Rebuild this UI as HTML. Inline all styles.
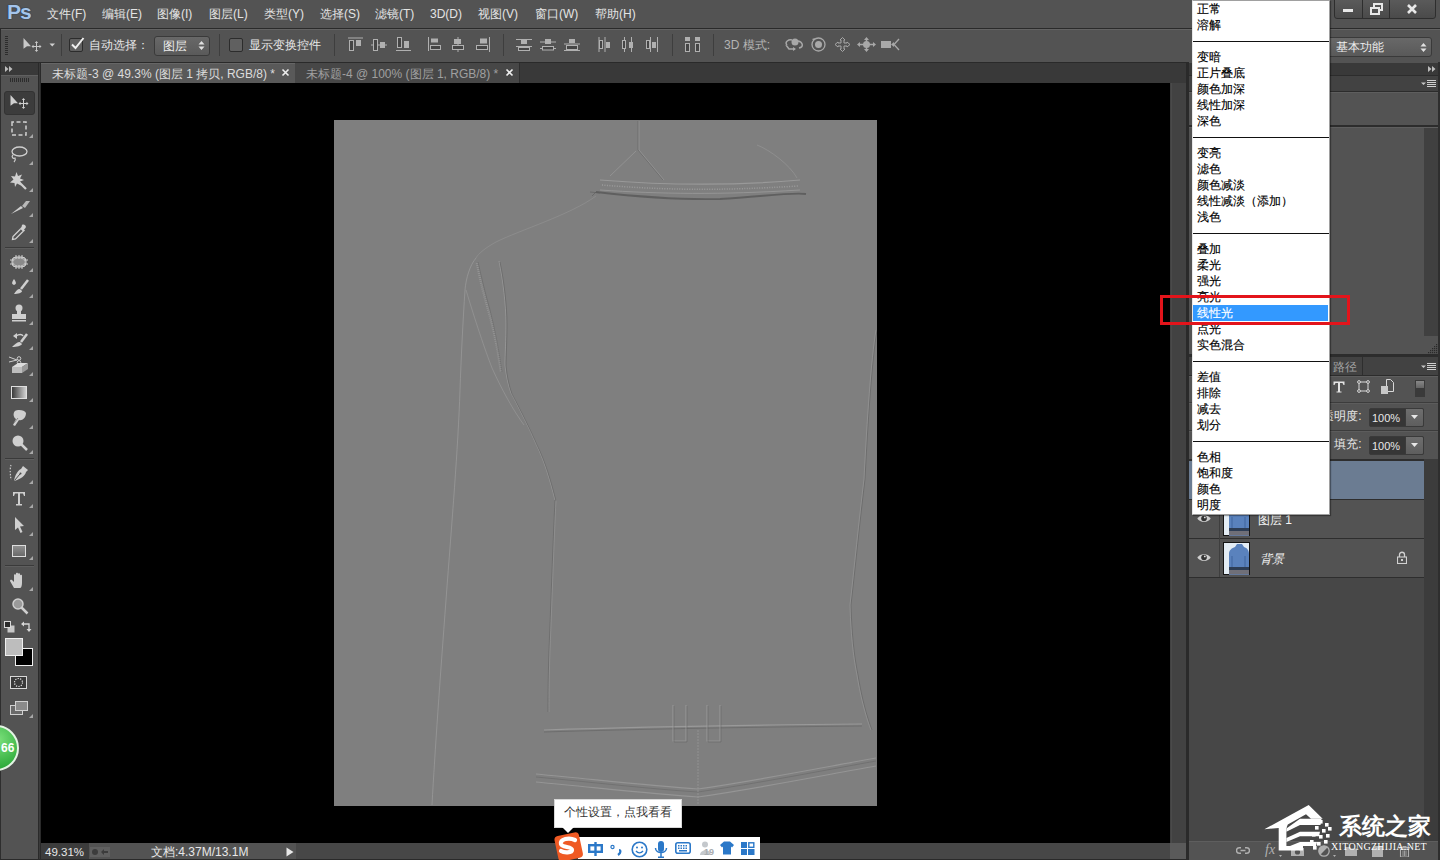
<!DOCTYPE html>
<html><head><meta charset="utf-8">
<style>
*{margin:0;padding:0;box-sizing:border-box}
html,body{width:1440px;height:860px;overflow:hidden;background:#535353;font-family:"Liberation Sans",sans-serif;color:#e0e0e0}
.a{position:absolute;display:block}
.t{position:absolute;white-space:nowrap;font-size:12px;line-height:14px}
</style></head><body>
<div class="a" style="left:0px;top:0px;width:1440px;height:860px;background:#535353;"></div>
<div class="a" style="left:0px;top:0px;width:1440px;height:28px;background:#535353;"></div>
<div class="a" style="left:0px;top:28px;width:1440px;height:1px;background:#2a2a2a;"></div>
<div class="a" style="left:0px;top:29px;width:1440px;height:33px;background:#535353;"></div>
<div class="a" style="left:0px;top:29px;width:1440px;height:1px;background:#636363;"></div>
<div class="a" style="left:0px;top:62px;width:1440px;height:1px;background:#2a2a2a;"></div>
<div class="a" style="left:0px;top:29px;width:1px;height:34px;background:#2a2a2a;"></div>
<div class="t" style="left:7px;top:0px;font-size:21px;line-height:24px;font-weight:bold;color:#a4c4ea;letter-spacing:-1px;text-shadow:0 0 1px #1e3550,0 0 1px #1e3550">Ps</div>
<div class="t" style="left:47px;top:7px;color:#e4e4e4;font-size:12px;">文件(F)</div>
<div class="t" style="left:102px;top:7px;color:#e4e4e4;font-size:12px;">编辑(E)</div>
<div class="t" style="left:157px;top:7px;color:#e4e4e4;font-size:12px;">图像(I)</div>
<div class="t" style="left:209px;top:7px;color:#e4e4e4;font-size:12px;">图层(L)</div>
<div class="t" style="left:264px;top:7px;color:#e4e4e4;font-size:12px;">类型(Y)</div>
<div class="t" style="left:320px;top:7px;color:#e4e4e4;font-size:12px;">选择(S)</div>
<div class="t" style="left:375px;top:7px;color:#e4e4e4;font-size:12px;">滤镜(T)</div>
<div class="t" style="left:430px;top:7px;color:#e4e4e4;font-size:12px;">3D(D)</div>
<div class="t" style="left:478px;top:7px;color:#e4e4e4;font-size:12px;">视图(V)</div>
<div class="t" style="left:535px;top:7px;color:#e4e4e4;font-size:12px;">窗口(W)</div>
<div class="t" style="left:595px;top:7px;color:#e4e4e4;font-size:12px;">帮助(H)</div>
<div class="a" style="left:1334px;top:-3px;width:102px;height:22px;border:1px solid #2e2e2e;border-radius:3px;background:linear-gradient(#5c5c5c,#4a4a4a)"></div>
<div class="a" style="left:1362px;top:0px;width:1px;height:18px;background:#2e2e2e;"></div>
<div class="a" style="left:1389px;top:0px;width:1px;height:18px;background:#2e2e2e;"></div>
<div class="a" style="left:1343px;top:9px;width:10px;height:3px;background:#e8e8e8;"></div>
<svg class="a" style="left:1370px;top:3px;" width="14" height="12" viewBox="0 0 14 12"><rect x="4" y="1" width="8" height="6" fill="none" stroke="#e8e8e8" stroke-width="2"/><rect x="1" y="5" width="8" height="6" fill="#525252" stroke="#e8e8e8" stroke-width="2"/></svg>
<svg class="a" style="left:1406px;top:3px;" width="12" height="12" viewBox="0 0 12 12"><path d="M2 2L10 10M10 2L2 10" stroke="#e8e8e8" stroke-width="2.6"/></svg>
<svg class="a" style="left:5px;top:36px;" width="3" height="20" viewBox="0 0 3 20"><rect x="0" y="0" width="3" height="1" fill="#2c2c2c"/><rect x="0" y="2" width="3" height="1" fill="#2c2c2c"/><rect x="0" y="4" width="3" height="1" fill="#2c2c2c"/><rect x="0" y="6" width="3" height="1" fill="#2c2c2c"/><rect x="0" y="8" width="3" height="1" fill="#2c2c2c"/><rect x="0" y="10" width="3" height="1" fill="#2c2c2c"/><rect x="0" y="12" width="3" height="1" fill="#2c2c2c"/><rect x="0" y="14" width="3" height="1" fill="#2c2c2c"/><rect x="0" y="16" width="3" height="1" fill="#2c2c2c"/><rect x="0" y="18" width="3" height="1" fill="#2c2c2c"/></svg>
<svg class="a" style="left:23px;top:38px;" width="19" height="14" viewBox="0 0 19 14"><path d="M0.5 0L8 8.2H4L0.5 10.8Z" fill="#c8c8c8"/><path d="M13.5 4V13M9.5 8.5H17.5" stroke="#c8c8c8" stroke-width="1"/><path d="M13.5 3L11.8 5H15.2ZM13.5 14L11.8 12H15.2ZM8.5 8.5L10.5 6.8V10.2ZM18.5 8.5L16.5 6.8V10.2Z" fill="#c8c8c8"/></svg>
<svg class="a" style="left:49px;top:43px;" width="7" height="4" viewBox="0 0 7 4"><path d="M0.5 0.5H6L3.25 3.5Z" fill="#d0d0d0"/></svg>
<div class="a" style="left:61px;top:34px;width:1px;height:22px;background:#3e3e3e;"></div>
<div class="a" style="left:69px;top:38px;width:14px;height:14px;border:1px solid #2c2c2c;border-radius:2px;background:#606060"></div>
<svg class="a" style="left:70px;top:36px;" width="15" height="15" viewBox="0 0 15 15"><path d="M2 8.5L5.5 12L13.5 2" fill="none" stroke="#f0f0f0" stroke-width="2"/></svg>
<div class="t" style="left:89px;top:38px;color:#e6e6e6;font-size:12px;">自动选择：</div>
<div class="a" style="left:154px;top:36px;width:56px;height:20px;border:1px solid #3a3a3a;border-radius:3px;background:linear-gradient(#686868,#5a5a5a)"></div>
<div class="t" style="left:163px;top:39px;color:#eeeeee;font-size:12px;">图层</div>
<svg class="a" style="left:198px;top:40px;" width="7" height="11" viewBox="0 0 7 11"><path d="M0.5 4.5L3.5 1L6.5 4.5ZM0.5 6.5L3.5 10L6.5 6.5Z" fill="#e0e0e0"/></svg>
<div class="a" style="left:219px;top:34px;width:1px;height:22px;background:#3e3e3e;"></div>
<div class="a" style="left:229px;top:38px;width:14px;height:14px;border:1px solid #2c2c2c;border-radius:2px;background:#606060"></div>
<div class="t" style="left:249px;top:38px;color:#e6e6e6;font-size:12px;">显示变换控件</div>
<div class="a" style="left:334px;top:34px;width:1px;height:22px;background:#3e3e3e;"></div>
<svg class="a" style="left:348px;top:37px;" width="16" height="15" viewBox="0 0 16 15"><rect x="0" y="0.5" width="15" height="1" fill="#b0b0b0"/><rect x="1.5" y="3.5" width="4" height="10" stroke="#b0b0b0" stroke-width="1" fill="#454545"/><rect x="8" y="3" width="5" height="6" fill="#b0b0b0"/></svg>
<svg class="a" style="left:371px;top:37px;" width="16" height="15" viewBox="0 0 16 15"><rect x="0" y="7.5" width="16" height="1" fill="#b0b0b0"/><rect x="2.5" y="2.5" width="4" height="11" stroke="#b0b0b0" stroke-width="1" fill="#454545"/><rect x="9" y="5" width="5" height="6" fill="#b0b0b0"/></svg>
<svg class="a" style="left:396px;top:37px;" width="16" height="15" viewBox="0 0 16 15"><rect x="0" y="13" width="15" height="1" fill="#b0b0b0"/><rect x="1.5" y="0.5" width="4" height="10" stroke="#b0b0b0" stroke-width="1" fill="#454545"/><rect x="8" y="4" width="5" height="7" fill="#b0b0b0"/></svg>
<svg class="a" style="left:428px;top:37px;" width="16" height="15" viewBox="0 0 16 15"><rect x="0" y="0" width="1" height="14" fill="#b0b0b0"/><rect x="3" y="1.5" width="7" height="4" fill="#b0b0b0"/><rect x="2.5" y="8.5" width="10" height="4" stroke="#b0b0b0" stroke-width="1" fill="#454545"/></svg>
<svg class="a" style="left:452px;top:37px;" width="16" height="15" viewBox="0 0 16 15"><rect x="5.5" y="0" width="1" height="15" fill="#b0b0b0"/><rect x="2" y="2" width="7" height="5" fill="#b0b0b0"/><rect x="0.5" y="8.5" width="11" height="4" stroke="#b0b0b0" stroke-width="1" fill="#454545"/></svg>
<svg class="a" style="left:476px;top:37px;" width="16" height="15" viewBox="0 0 16 15"><rect x="13" y="0" width="1" height="15" fill="#b0b0b0"/><rect x="4" y="1.5" width="7" height="5" fill="#b0b0b0"/><rect x="0.5" y="8.5" width="11" height="4" stroke="#b0b0b0" stroke-width="1" fill="#454545"/></svg>
<div class="a" style="left:503px;top:34px;width:1px;height:22px;background:#3e3e3e;"></div>
<svg class="a" style="left:516px;top:38px;" width="16" height="15" viewBox="0 0 16 15"><rect x="0" y="1" width="16" height="1" fill="#b0b0b0"/><rect x="0" y="8" width="16" height="1" fill="#b0b0b0"/><rect x="5" y="2" width="6" height="4" fill="#b0b0b0"/><rect x="2.5" y="9.5" width="11" height="3" stroke="#b0b0b0" stroke-width="1" fill="#454545"/></svg>
<svg class="a" style="left:540px;top:38px;" width="16" height="15" viewBox="0 0 16 15"><rect x="0" y="3.5" width="16" height="1" fill="#b0b0b0"/><rect x="0" y="10" width="16" height="1" fill="#b0b0b0"/><rect x="5" y="1" width="6" height="5" fill="#b0b0b0"/><rect x="2.5" y="8.5" width="11" height="3.5" stroke="#b0b0b0" stroke-width="1" fill="#454545"/></svg>
<svg class="a" style="left:564px;top:38px;" width="16" height="15" viewBox="0 0 16 15"><rect x="0" y="5.5" width="16" height="1" fill="#b0b0b0"/><rect x="0" y="12" width="16" height="1" fill="#b0b0b0"/><rect x="5" y="1" width="6" height="4" fill="#b0b0b0"/><rect x="2.5" y="7.5" width="11" height="4" stroke="#b0b0b0" stroke-width="1" fill="#454545"/></svg>
<svg class="a" style="left:598px;top:37px;" width="16" height="15" viewBox="0 0 16 15"><rect x="0.5" y="0" width="1" height="15" fill="#b0b0b0"/><rect x="6.5" y="0" width="1" height="15" fill="#b0b0b0"/><rect x="1.5" y="3.5" width="3" height="8" stroke="#b0b0b0" stroke-width="1" fill="#454545"/><rect x="8" y="5" width="4" height="6" fill="#b0b0b0"/></svg>
<svg class="a" style="left:622px;top:37px;" width="16" height="15" viewBox="0 0 16 15"><rect x="2" y="0" width="1" height="15" fill="#b0b0b0"/><rect x="9" y="0" width="1" height="15" fill="#b0b0b0"/><rect x="0.5" y="3.5" width="3" height="8" stroke="#b0b0b0" stroke-width="1" fill="#454545"/><rect x="7" y="5" width="4" height="6" fill="#b0b0b0"/></svg>
<svg class="a" style="left:646px;top:37px;" width="16" height="15" viewBox="0 0 16 15"><rect x="4" y="0" width="1" height="15" fill="#b0b0b0"/><rect x="11" y="0" width="1" height="15" fill="#b0b0b0"/><rect x="0.5" y="3.5" width="3" height="8" stroke="#b0b0b0" stroke-width="1" fill="#454545"/><rect x="6" y="5" width="4" height="6" fill="#b0b0b0"/></svg>
<div class="a" style="left:672px;top:34px;width:1px;height:22px;background:#3e3e3e;"></div>
<svg class="a" style="left:685px;top:37px;" width="16" height="15" viewBox="0 0 16 15"><rect x="0" y="0" width="5" height="4" fill="#b0b0b0"/><rect x="10" y="0" width="5" height="4" fill="#b0b0b0"/><rect x="0.5" y="6.5" width="4" height="8" stroke="#b0b0b0" stroke-width="1" fill="#454545"/><rect x="10.5" y="6.5" width="4" height="8" stroke="#b0b0b0" stroke-width="1" fill="#454545"/></svg>
<div class="a" style="left:713px;top:34px;width:1px;height:22px;background:#3e3e3e;"></div>
<div class="t" style="left:724px;top:38px;color:#b4b4b4;font-size:12px;">3D 模式:</div>
<svg class="a" style="left:784px;top:37px;" width="20" height="15" viewBox="0 0 20 15"><circle cx="11" cy="5" r="3.5" fill="#a8a8a8"/><path d="M3 8C0 5 5 2 8 3M14 4C19 5 20 10 15 11M2 8L5 12H11" fill="none" stroke="#a8a8a8" stroke-width="1.5"/><path d="M9 10L12 12L9 14Z" fill="#a8a8a8"/></svg>
<svg class="a" style="left:810px;top:37px;" width="17" height="15" viewBox="0 0 17 15"><circle cx="8.5" cy="7.5" r="6.5" fill="none" stroke="#a8a8a8" stroke-width="1.3"/><circle cx="8.5" cy="7.5" r="3.5" fill="#a8a8a8"/><path d="M2 2L5 1L4 4Z" fill="#a8a8a8"/></svg>
<svg class="a" style="left:834px;top:37px;" width="17" height="15" viewBox="0 0 17 15"><path d="M8.5 0.5L11 3H10V6H13V5L16 7.5L13 10V9H10V12H11L8.5 14.5L6 12H7V9H4V10L1 7.5L4 5V6H7V3H6Z" fill="none" stroke="#a8a8a8" stroke-width="1"/></svg>
<svg class="a" style="left:857px;top:37px;" width="19" height="15" viewBox="0 0 19 15"><path d="M9.5 0L12 3H7ZM9.5 15L12 12H7ZM0 7.5L3 5V10ZM19 7.5L16 5V10Z" fill="#a8a8a8"/><circle cx="9.5" cy="7.5" r="3.5" fill="#a8a8a8"/><path d="M3 7.5H16M9.5 3V12" stroke="#a8a8a8" stroke-width="1.5"/></svg>
<svg class="a" style="left:881px;top:38px;" width="19" height="14" viewBox="0 0 19 14"><rect x="0" y="3" width="10" height="7" fill="#a8a8a8"/><path d="M10 6.5L13 4V9Z" fill="#a8a8a8"/><path d="M18 1L13 6.5L18 12" fill="none" stroke="#a8a8a8" stroke-width="1.3"/></svg>
<div class="a" style="left:1310px;top:37px;width:122px;height:20px;border:1px solid #3a3a3a;border-radius:3px;background:linear-gradient(#686868,#595959)"></div>
<div class="t" style="left:1336px;top:40px;color:#eeeeee;font-size:12px;">基本功能</div>
<svg class="a" style="left:1420px;top:42px;" width="7" height="11" viewBox="0 0 7 11"><path d="M0.5 4.5L3.5 1L6.5 4.5ZM0.5 6.5L3.5 10L6.5 6.5Z" fill="#e0e0e0"/></svg>
<div class="a" style="left:41px;top:63px;width:1145px;height:20px;background:#393939;"></div>
<div class="a" style="left:41px;top:63px;width:254px;height:20px;background:#595959;"></div>
<div class="a" style="left:41px;top:63px;width:254px;height:1px;background:#666666;"></div>
<div class="a" style="left:295px;top:63px;width:225px;height:20px;background:#474747;"></div>
<div class="a" style="left:519px;top:63px;width:1px;height:20px;background:#2e2e2e;"></div>
<div class="t" style="left:52px;top:67px;color:#dcdcdc;font-size:12px;">未标题-3 @ 49.3% (图层 1 拷贝, RGB/8) *</div>
<svg class="a" style="left:281px;top:68px;" width="9" height="9" viewBox="0 0 9 9"><path d="M1.5 1.5L7.5 7.5M7.5 1.5L1.5 7.5" stroke="#eeeeee" stroke-width="1.6"/></svg>
<div class="t" style="left:306px;top:67px;color:#a0a0a0;font-size:12px;">未标题-4 @ 100% (图层 1, RGB/8) *</div>
<svg class="a" style="left:505px;top:68px;" width="9" height="9" viewBox="0 0 9 9"><path d="M1.5 1.5L7.5 7.5M7.5 1.5L1.5 7.5" stroke="#eeeeee" stroke-width="1.6"/></svg>
<div class="a" style="left:41px;top:83px;width:1129px;height:760px;background:#000000;"></div>
<div class="a" style="left:334px;top:120px;width:543px;height:686px;background:#7f7f7f;"></div>
<svg class="a" style="left:334px;top:120px" width="543" height="685" viewBox="334 120 543 685"><path d="M638 121V150L663 180" fill="none" stroke="#5c5c5c" stroke-width="1" opacity=".45"/><path d="M639 121V150L664 180" fill="none" stroke="#a4a4a4" stroke-width="1" opacity=".5"/><path d="M636 151L610 176" fill="none" stroke="#a4a4a4" stroke-width="1" opacity=".5"/><path d="M757 145C770 150 790 165 797 178" fill="none" stroke="#a4a4a4" stroke-width="1" opacity=".4"/><path d="M600 180C650 184 720 187 800 180" fill="none" stroke="#a4a4a4" stroke-width="1.2" opacity=".7"/><path d="M602 185C660 190 720 191 798 186" fill="none" stroke="#a4a4a4" stroke-width="1.5" opacity=".8" stroke-dasharray="1 1.5"/><path d="M600 190C660 194 720 195 800 190" fill="none" stroke="#a4a4a4" stroke-width="1" opacity=".6"/><path d="M596 192C640 197 680 200 720 199C760 197 790 192 806 194" fill="none" stroke="#5c5c5c" stroke-width="1.8" opacity=".9"/><path d="M596 192L592 196M600 193L590 192" fill="none" stroke="#5c5c5c" stroke-width="1" opacity=".6"/><path d="M596 196C570 215 520 230 496 242C485 248 478 254 476 258" fill="none" stroke="#a4a4a4" stroke-width="1" opacity=".35"/><path d="M476 258C470 265 466 278 465 290C463 320 461 360 460 390C458 450 452 520 446 600C440 680 435 750 432 805" fill="none" stroke="#a4a4a4" stroke-width="1" opacity=".55"/><path d="M477 263C480 280 484 295 488 309C494 330 498 350 501 372" fill="none" stroke="#a4a4a4" stroke-width="2.5" opacity=".55" stroke-dasharray="1 1"/><path d="M478 262C482 280 486 296 490 310C495 330 499 350 502 372" fill="none" stroke="#5c5c5c" stroke-width="1" opacity=".4"/><path d="M499 261C503 280 506 305 506 324C506 340 505 355 505 365C506 375 508 385 511 393C520 410 530 430 536 444C544 460 550 480 555 500" fill="none" stroke="#a4a4a4" stroke-width="1" opacity=".6"/><path d="M500 262C504 281 507 306 507 325C507 341 506 356 506 366C507 376 509 386 512 394C521 411 531 431 537 445C545 461 551 481 556 501" fill="none" stroke="#5c5c5c" stroke-width="1" opacity=".5"/><path d="M466 290C475 320 485 350 492 368C502 390 513 410 524 425" fill="none" stroke="#a4a4a4" stroke-width="1" opacity=".45"/><path d="M555 500C553 540 551 600 549 650C548 680 548 700 548 712" fill="none" stroke="#5c5c5c" stroke-width="1" opacity=".45"/><path d="M556 500C554 540 552 600 550 650C549 680 549 700 549 712" fill="none" stroke="#a4a4a4" stroke-width="1" opacity=".4"/><path d="M877 330C872 360 868 420 865 479C860 520 855 570 851 605C852 640 855 660 858 675C862 700 868 720 872 730" fill="none" stroke="#5c5c5c" stroke-width="1" opacity=".5"/><path d="M876 330C871 360 867 420 864 479C859 520 854 570 850 605C851 640 854 660 857 675C861 700 867 720 871 730" fill="none" stroke="#a4a4a4" stroke-width="1" opacity=".45"/><path d="M544 730C640 727 760 725 862 724" fill="none" stroke="#a4a4a4" stroke-width="1.2" opacity=".7"/><path d="M544 732C640 729 760 727 862 726" fill="none" stroke="#5c5c5c" stroke-width="1" opacity=".5"/><path d="M536 774C600 780 650 786 698 789C760 780 820 768 876 758" fill="none" stroke="#a4a4a4" stroke-width="1.2" opacity=".6"/><path d="M536 782C600 788 650 794 698 797C760 788 820 776 876 766" fill="none" stroke="#a4a4a4" stroke-width="1.2" opacity=".6"/><path d="M536 777C600 783 650 789 698 792C760 783 820 771 876 761" fill="none" stroke="#5c5c5c" stroke-width="1" opacity=".4"/><path d="M698 730V805" fill="none" stroke="#a4a4a4" stroke-width="1" opacity=".5" stroke-dasharray="2 1"/><path d="M673 705V741H686V705M707 705V741H720V705" fill="none" stroke="#a4a4a4" stroke-width="1.2" opacity=".6"/><path d="M674 706V742H687V706M708 706V742H721V706" fill="none" stroke="#5c5c5c" stroke-width="1" opacity=".4"/></svg>
<div class="a" style="left:1170px;top:83px;width:16px;height:760px;background:#424242;"></div>
<div class="a" style="left:1171px;top:83px;width:1px;height:760px;background:#4a4a4a;"></div>
<div class="a" style="left:1186px;top:62px;width:3px;height:798px;background:#2a2a2a;"></div>
<div class="a" style="left:41px;top:843px;width:1129px;height:16px;background:#474747;"></div>
<div class="a" style="left:41px;top:843px;width:48px;height:16px;background:#3c3c3c;"></div>
<div class="a" style="left:89px;top:843px;width:207px;height:16px;background:#535353;"></div>
<div class="a" style="left:1170px;top:843px;width:16px;height:16px;background:#5a5a5a;"></div>
<div class="a" style="left:0px;top:859px;width:1440px;height:1px;background:#2a2a2a;"></div>
<div class="t" style="left:45px;top:845px;color:#e8e8e8;font-size:11.5px;">49.31%</div>
<div class="a" style="left:90px;top:847px;width:20px;height:10px;background:#606060;"></div>
<svg class="a" style="left:91px;top:848px;" width="18" height="8" viewBox="0 0 18 8"><circle cx="4" cy="4" r="3" fill="#3c3c3c"/><path d="M10 4L13 1V3H17V5H13V7Z" fill="#3c3c3c"/></svg>
<div class="t" style="left:151px;top:845px;color:#e8e8e8;font-size:12px;">文档:4.37M/13.1M</div>
<svg class="a" style="left:286px;top:847px;" width="8" height="10" viewBox="0 0 8 10"><path d="M0.5 0.5L7.5 5L0.5 9.5Z" fill="#e8e8e8"/></svg>
<div class="a" style="left:0px;top:63px;width:38px;height:796px;background:#535353;"></div>
<div class="a" style="left:0px;top:63px;width:1px;height:796px;background:#2e2e2e;"></div>
<div class="a" style="left:38px;top:63px;width:3px;height:796px;background:#2a2a2a;"></div>
<div class="a" style="left:39px;top:63px;width:1px;height:796px;background:#3a3a3a;"></div>
<div class="a" style="left:1px;top:63px;width:37px;height:12px;background:#393939;"></div>
<svg class="a" style="left:5px;top:66px;" width="8" height="6" viewBox="0 0 8 6"><path d="M0 0L3.5 3L0 6ZM4 0L7.5 3L4 6Z" fill="#bdbdbd"/></svg>
<div class="a" style="left:1px;top:75px;width:37px;height:1px;background:#606060;"></div>
<svg class="a" style="left:10px;top:78px;" width="20" height="4" viewBox="0 0 20 4"><rect x="0" y="0" width="1" height="4" fill="#2c2c2c"/><rect x="2" y="0" width="1" height="4" fill="#2c2c2c"/><rect x="4" y="0" width="1" height="4" fill="#2c2c2c"/><rect x="6" y="0" width="1" height="4" fill="#2c2c2c"/><rect x="8" y="0" width="1" height="4" fill="#2c2c2c"/><rect x="10" y="0" width="1" height="4" fill="#2c2c2c"/><rect x="12" y="0" width="1" height="4" fill="#2c2c2c"/><rect x="14" y="0" width="1" height="4" fill="#2c2c2c"/><rect x="16" y="0" width="1" height="4" fill="#2c2c2c"/><rect x="18" y="0" width="1" height="4" fill="#2c2c2c"/></svg>
<div class="a" style="left:4px;top:91px;width:31px;height:24px;border:1px solid #333;border-radius:3px;background:#3c3c3c"></div>
<svg class="a" style="left:10px;top:95px;" width="19" height="14" viewBox="0 0 19 14"><path d="M0.5 0L8 8.2H4L0.5 10.8Z" fill="#cfcfcf"/><path d="M13.5 4V13M9.5 8.5H17.5" stroke="#cfcfcf" stroke-width="1"/><path d="M13.5 3L11.8 5H15.2ZM13.5 14L11.8 12H15.2ZM8.5 8.5L10.5 6.8V10.2ZM18.5 8.5L16.5 6.8V10.2Z" fill="#cfcfcf"/></svg>
<svg class="a" style="left:11px;top:121px;" width="16" height="15" viewBox="0 0 16 15"><rect x="1" y="1" width="14" height="13" fill="none" stroke="#cfcfcf" stroke-width="1.5" stroke-dasharray="4 2.5" stroke-dashoffset="2"/></svg>
<svg class="a" style="left:29px;top:134px;" width="4" height="4" viewBox="0 0 4 4"><path d="M4 0V4H0Z" fill="#a8a8a8"/></svg>
<svg class="a" style="left:10px;top:146px;" width="18" height="17" viewBox="0 0 18 17"><ellipse cx="9.5" cy="5.5" rx="7.5" ry="4.5" fill="none" stroke="#cfcfcf" stroke-width="1.3"/><path d="M3 9C1 11 3 13 5 12C6 14 4 16 4 16" fill="none" stroke="#cfcfcf" stroke-width="1.2"/></svg>
<svg class="a" style="left:29px;top:161px;" width="4" height="4" viewBox="0 0 4 4"><path d="M4 0V4H0Z" fill="#a8a8a8"/></svg>
<svg class="a" style="left:10px;top:172px;" width="18" height="18" viewBox="0 0 18 18"><path d="M6.5 0L8 4L12 2.5L10 6.5L14 8L10 9.5L11 13.5L7 11.5L5 15L4.5 11L0 10.5L3.5 7.5L1 4L5 4.5Z" fill="#cfcfcf"/><path d="M9 10L16 17" stroke="#cfcfcf" stroke-width="2.2"/></svg>
<svg class="a" style="left:29px;top:188px;" width="4" height="4" viewBox="0 0 4 4"><path d="M4 0V4H0Z" fill="#a8a8a8"/></svg>
<svg class="a" style="left:10px;top:200px;" width="20" height="15" viewBox="0 0 20 15"><path d="M1 14L11 6L13 8Z" fill="#cfcfcf"/><path d="M12 6L16 1H20L15 8Z" fill="#b8b8b8"/></svg>
<svg class="a" style="left:29px;top:213px;" width="4" height="4" viewBox="0 0 4 4"><path d="M4 0V4H0Z" fill="#a8a8a8"/></svg>
<svg class="a" style="left:11px;top:224px;" width="17" height="17" viewBox="0 0 17 17"><path d="M11 1C13 -0.5 16 2 14.5 4L13 5.5L14 6.5L12.5 8L9 4.5L10.5 3Z" fill="#cfcfcf"/><path d="M9.5 5L2 12.5L1.5 15.5L4.5 15L12 7.5" fill="none" stroke="#cfcfcf" stroke-width="1.3"/></svg>
<svg class="a" style="left:29px;top:239px;" width="4" height="4" viewBox="0 0 4 4"><path d="M4 0V4H0Z" fill="#a8a8a8"/></svg>
<div class="a" style="left:5px;top:247px;width:29px;height:1px;background:#3a3a3a;"></div>
<div class="a" style="left:5px;top:248px;width:29px;height:1px;background:#5e5e5e;"></div>
<svg class="a" style="left:10px;top:254px;" width="18" height="16" viewBox="0 0 18 16"><rect x="2" y="3" width="14" height="10" rx="4" fill="#9a9a9a" stroke="#cfcfcf" stroke-width="1"/><path d="M6 1V15M9 1V15M12 1V15M0 6H18M0 10H18" stroke="#cfcfcf" stroke-width="1"/><rect x="4" y="5" width="10" height="6" rx="2" fill="#8a8a8a"/></svg>
<svg class="a" style="left:29px;top:268px;" width="4" height="4" viewBox="0 0 4 4"><path d="M4 0V4H0Z" fill="#a8a8a8"/></svg>
<svg class="a" style="left:10px;top:279px;" width="20" height="17" viewBox="0 0 20 17"><path d="M4 0C6 3 7 5 4 6C1 5 2 3 4 0Z" fill="#cfcfcf"/><path d="M18 1L11 10" stroke="#cfcfcf" stroke-width="2.5"/><path d="M10 10C7 10 6 12 4 15C8 15 12 14 12 12Z" fill="#cfcfcf"/></svg>
<svg class="a" style="left:29px;top:294px;" width="4" height="4" viewBox="0 0 4 4"><path d="M4 0V4H0Z" fill="#a8a8a8"/></svg>
<svg class="a" style="left:11px;top:304px;" width="16" height="19" viewBox="0 0 16 19"><circle cx="8" cy="4" r="3.5" fill="#cfcfcf"/><rect x="6" y="6" width="4" height="5" fill="#cfcfcf"/><rect x="1" y="10" width="14" height="5" fill="#cfcfcf"/><rect x="1" y="16" width="14" height="1.5" fill="#cfcfcf"/></svg>
<svg class="a" style="left:29px;top:321px;" width="4" height="4" viewBox="0 0 4 4"><path d="M4 0V4H0Z" fill="#a8a8a8"/></svg>
<svg class="a" style="left:10px;top:331px;" width="19" height="17" viewBox="0 0 19 17"><path d="M3 5L7 2V8Z" fill="#cfcfcf"/><path d="M6 5C9 3 12 3 13 5" fill="none" stroke="#cfcfcf" stroke-width="1.5"/><path d="M17 3L11 11" stroke="#cfcfcf" stroke-width="2.5"/><path d="M10 11C7 11 5 13 2 16C7 16 11 15 12 13Z" fill="#cfcfcf"/></svg>
<svg class="a" style="left:29px;top:346px;" width="4" height="4" viewBox="0 0 4 4"><path d="M4 0V4H0Z" fill="#a8a8a8"/></svg>
<svg class="a" style="left:9px;top:356px;" width="21" height="18" viewBox="0 0 21 18"><circle cx="10" cy="2.5" r="1.8" fill="none" stroke="#cfcfcf" stroke-width="1"/><circle cx="10" cy="6.5" r="1.8" fill="none" stroke="#cfcfcf" stroke-width="1"/><path d="M0 1L8 4M0 6L8 4" stroke="#cfcfcf" stroke-width="1"/><path d="M3 11L9 7H19L13 11Z" fill="#dcdcdc"/><path d="M3 11H13V17H3Z" fill="#bdbdbd"/><path d="M13 11L19 7V13L13 17Z" fill="#9a9a9a"/></svg>
<svg class="a" style="left:29px;top:372px;" width="4" height="4" viewBox="0 0 4 4"><path d="M4 0V4H0Z" fill="#a8a8a8"/></svg>
<div class="a" style="left:11px;top:386px;width:16px;height:13px;border:1px solid #dedede;background:linear-gradient(90deg,#3a3a3a,#d0d0d0)"></div>
<svg class="a" style="left:29px;top:398px;" width="4" height="4" viewBox="0 0 4 4"><path d="M4 0V4H0Z" fill="#a8a8a8"/></svg>
<svg class="a" style="left:12px;top:409px;" width="15" height="18" viewBox="0 0 15 18"><path d="M3 2C6 0 13 1 14 4C14 9 10 12 7 11L3 17L1 16L4 10C1 8 1 4 3 2Z" fill="#cfcfcf"/><path d="M6 9L2 14" stroke="#8a8a8a" stroke-width="1"/></svg>
<svg class="a" style="left:29px;top:425px;" width="4" height="4" viewBox="0 0 4 4"><path d="M4 0V4H0Z" fill="#a8a8a8"/></svg>
<svg class="a" style="left:12px;top:435px;" width="16" height="17" viewBox="0 0 16 17"><circle cx="6" cy="6" r="5.5" fill="#cfcfcf"/><path d="M9 9L15 15" stroke="#cfcfcf" stroke-width="2.5"/></svg>
<svg class="a" style="left:29px;top:450px;" width="4" height="4" viewBox="0 0 4 4"><path d="M4 0V4H0Z" fill="#a8a8a8"/></svg>
<div class="a" style="left:5px;top:458px;width:29px;height:1px;background:#3a3a3a;"></div>
<div class="a" style="left:5px;top:459px;width:29px;height:1px;background:#5e5e5e;"></div>
<svg class="a" style="left:9px;top:464px;" width="21" height="18" viewBox="0 0 21 18"><path d="M2 1C1 4 1 8 2 16" fill="none" stroke="#cfcfcf" stroke-width="1.2" stroke-dasharray="1.5 1.5"/><path d="M14 2L19 6L17 8C16 12 12 15 5 17C6 11 9 6 12 5Z" fill="#cfcfcf"/><path d="M5.5 16.5L11 10" stroke="#4a4a4a" stroke-width="1"/><circle cx="11.5" cy="9.5" r="1" fill="#4a4a4a"/></svg>
<svg class="a" style="left:29px;top:480px;" width="4" height="4" viewBox="0 0 4 4"><path d="M4 0V4H0Z" fill="#a8a8a8"/></svg>
<svg class="a" style="left:12px;top:491px;" width="14" height="15" viewBox="0 0 14 15"><path d="M1 1H13V5H12L11 2.5H8V13H10V14.5H4V13H6V2.5H3L2 5H1Z" fill="#cfcfcf"/></svg>
<svg class="a" style="left:29px;top:504px;" width="4" height="4" viewBox="0 0 4 4"><path d="M4 0V4H0Z" fill="#a8a8a8"/></svg>
<svg class="a" style="left:14px;top:517px;" width="11" height="17" viewBox="0 0 11 17"><path d="M1 0L10 9L6 9.5L8.5 15L6.5 16L4 10.5L1 13Z" fill="#cfcfcf"/></svg>
<svg class="a" style="left:29px;top:532px;" width="4" height="4" viewBox="0 0 4 4"><path d="M4 0V4H0Z" fill="#a8a8a8"/></svg>
<div class="a" style="left:12px;top:545px;width:14px;height:12px;border:1px solid #dedede;background:linear-gradient(#8f8f8f,#6a6a6a)"></div>
<svg class="a" style="left:29px;top:556px;" width="4" height="4" viewBox="0 0 4 4"><path d="M4 0V4H0Z" fill="#a8a8a8"/></svg>
<div class="a" style="left:5px;top:565px;width:29px;height:1px;background:#3a3a3a;"></div>
<div class="a" style="left:5px;top:566px;width:29px;height:1px;background:#5e5e5e;"></div>
<svg class="a" style="left:10px;top:572px;" width="18" height="17" viewBox="0 0 18 17"><path d="M4 16L0 9C0 8 1 7.5 2 8L4 10V3C4 2 6 2 6 3V8V1.5C6 0.5 8 0.5 8 1.5V8V2C8 1 10 1 10 2V8V3.5C10 2.5 12 2.5 12 3.5V11C12 14 11 16 10 16Z" fill="#cfcfcf"/></svg>
<svg class="a" style="left:29px;top:587px;" width="4" height="4" viewBox="0 0 4 4"><path d="M4 0V4H0Z" fill="#a8a8a8"/></svg>
<svg class="a" style="left:12px;top:598px;" width="17" height="17" viewBox="0 0 17 17"><circle cx="6" cy="6" r="5" fill="#9a9a9a" stroke="#cfcfcf" stroke-width="1.5"/><path d="M9.5 9.5L15.5 15.5" stroke="#cfcfcf" stroke-width="2.5"/></svg>
<svg class="a" style="left:4px;top:621px;" width="11" height="12" viewBox="0 0 11 12"><rect x="3.5" y="4.5" width="7" height="7" fill="#c8c8c8"/><rect x="0.5" y="0.5" width="6" height="6" fill="#2a2a2a" stroke="#d8d8d8" stroke-width="1"/></svg>
<svg class="a" style="left:21px;top:620px;" width="12" height="13" viewBox="0 0 12 13"><path d="M2 4H8V10" fill="none" stroke="#d8d8d8" stroke-width="1.3"/><path d="M0 4L3 1.5V6.5ZM8 12L5.5 9H10.5Z" fill="#d8d8d8"/></svg>
<div class="a" style="left:15px;top:648px;width:18px;height:18px;border:1px solid #f0f0f0;background:#000"></div>
<div class="a" style="left:5px;top:638px;width:18px;height:18px;border:1px solid #f0f0f0;background:#bdbdbd"></div>
<div class="a" style="left:10px;top:676px;width:17px;height:13px;border:1px solid #d8d8d8;background:#3a3a3a"></div>
<svg class="a" style="left:13px;top:677px;" width="11" height="11" viewBox="0 0 11 11"><circle cx="5.5" cy="5.5" r="4" fill="none" stroke="#e8e8e8" stroke-width="1.2" stroke-dasharray="1.2 1.3"/></svg>
<svg class="a" style="left:10px;top:701px;" width="19" height="15" viewBox="0 0 19 15"><rect x="0.5" y="4.5" width="12" height="9" fill="#6a6a6a" stroke="#d0d0d0"/><rect x="5.5" y="0.5" width="12" height="9" fill="#8a8a8a" stroke="#d0d0d0"/></svg>
<svg class="a" style="left:29px;top:714px;" width="4" height="4" viewBox="0 0 4 4"><path d="M4 0V4H0Z" fill="#a8a8a8"/></svg>
<div class="a" style="left:-27px;top:725px;width:46px;height:46px;border-radius:50%;border:2px solid #e4f4e4;background:radial-gradient(circle at 55% 30%,#7be07b,#2aa838 80%)"></div>
<div class="t" style="left:1px;top:741px;color:#ffffff;font-size:12px;font-weight:bold">66</div>
<div class="a" style="left:1189px;top:62px;width:251px;height:798px;background:#535353;"></div>
<div class="a" style="left:1189px;top:63px;width:249px;height:12px;background:#393939;"></div>
<svg class="a" style="left:1428px;top:66px;" width="8" height="6" viewBox="0 0 8 6"><path d="M0 0L3.5 3L0 6ZM4 0L7.5 3L4 6Z" fill="#bdbdbd"/></svg>
<div class="a" style="left:1438px;top:62px;width:2px;height:798px;background:#2e2e2e;"></div>
<div class="a" style="left:1189px;top:75px;width:249px;height:17px;background:#424242;"></div>
<div class="a" style="left:1189px;top:75px;width:249px;height:1px;background:#2c2c2c;"></div>
<svg class="a" style="left:1421px;top:79px;" width="15" height="9" viewBox="0 0 15 9"><path d="M0 3.5H5L2.5 6Z" fill="#c8c8c8"/><rect x="6" y="1" width="9" height="1" fill="#d0d0d0"/><rect x="6" y="3" width="9" height="1" fill="#d0d0d0"/><rect x="6" y="5" width="9" height="1" fill="#d0d0d0"/><rect x="6" y="7" width="9" height="1" fill="#d0d0d0"/></svg>
<div class="a" style="left:1189px;top:91px;width:249px;height:1px;background:#2c2c2c;"></div>
<div class="a" style="left:1189px;top:92px;width:249px;height:1px;background:#5e5e5e;"></div>
<div class="a" style="left:1189px;top:125px;width:249px;height:2px;background:#2c2c2c;"></div>
<div class="a" style="left:1189px;top:127px;width:249px;height:1px;background:#5e5e5e;"></div>
<div class="a" style="left:1424px;top:128px;width:14px;height:208px;background:#404040;"></div>
<svg class="a" style="left:1428px;top:344px;" width="10" height="10" viewBox="0 0 10 10"><rect x="8" y="0" width="1.2" height="1.2" fill="#2a2a2a"/><rect x="6" y="2" width="1.2" height="1.2" fill="#2a2a2a"/><rect x="8" y="2" width="1.2" height="1.2" fill="#2a2a2a"/><rect x="4" y="4" width="1.2" height="1.2" fill="#2a2a2a"/><rect x="6" y="4" width="1.2" height="1.2" fill="#2a2a2a"/><rect x="8" y="4" width="1.2" height="1.2" fill="#2a2a2a"/><rect x="2" y="6" width="1.2" height="1.2" fill="#2a2a2a"/><rect x="4" y="6" width="1.2" height="1.2" fill="#2a2a2a"/><rect x="6" y="6" width="1.2" height="1.2" fill="#2a2a2a"/><rect x="8" y="6" width="1.2" height="1.2" fill="#2a2a2a"/><rect x="0" y="8" width="1.2" height="1.2" fill="#2a2a2a"/><rect x="2" y="8" width="1.2" height="1.2" fill="#2a2a2a"/><rect x="4" y="8" width="1.2" height="1.2" fill="#2a2a2a"/><rect x="6" y="8" width="1.2" height="1.2" fill="#2a2a2a"/><rect x="8" y="8" width="1.2" height="1.2" fill="#2a2a2a"/></svg>
<div class="a" style="left:1189px;top:354px;width:249px;height:3px;background:#2c2c2c;"></div>
<div class="a" style="left:1189px;top:357px;width:249px;height:18px;background:#424242;"></div>
<div class="t" style="left:1333px;top:360px;color:#a0a0a0;font-size:12px;">路径</div>
<div class="a" style="left:1362px;top:357px;width:1px;height:18px;background:#2e2e2e;"></div>
<svg class="a" style="left:1421px;top:362px;" width="15" height="9" viewBox="0 0 15 9"><path d="M0 3.5H5L2.5 6Z" fill="#c8c8c8"/><rect x="6" y="1" width="9" height="1" fill="#d0d0d0"/><rect x="6" y="3" width="9" height="1" fill="#d0d0d0"/><rect x="6" y="5" width="9" height="1" fill="#d0d0d0"/><rect x="6" y="7" width="9" height="1" fill="#d0d0d0"/></svg>
<div class="a" style="left:1189px;top:375px;width:249px;height:1px;background:#2c2c2c;"></div>
<div class="a" style="left:1189px;top:376px;width:249px;height:1px;background:#5e5e5e;"></div>
<svg class="a" style="left:1333px;top:381px;" width="12" height="12" viewBox="0 0 12 12"><path d="M0.5 0.5H11.5V4H10.5L9.5 2H7V10.5H8.5V11.5H3.5V10.5H5V2H2.5L1.5 4H0.5Z" fill="#e4e4e4"/></svg>
<svg class="a" style="left:1357px;top:380px;" width="13" height="13" viewBox="0 0 13 13"><rect x="2" y="2" width="9" height="9" fill="none" stroke="#d8d8d8" stroke-width="1"/><circle cx="2" cy="2" r="1.4" fill="#535353" stroke="#d8d8d8"/><circle cx="11" cy="2" r="1.4" fill="#535353" stroke="#d8d8d8"/><circle cx="2" cy="11" r="1.4" fill="#535353" stroke="#d8d8d8"/><circle cx="11" cy="11" r="1.4" fill="#535353" stroke="#d8d8d8"/></svg>
<svg class="a" style="left:1381px;top:379px;" width="13" height="15" viewBox="0 0 13 15"><path d="M5.5 0.5H9.5L12.5 3.5V12.5H5.5Z" fill="none" stroke="#d8d8d8"/><rect x="0" y="7" width="7" height="8" fill="#c8c8c8"/></svg>
<div class="a" style="left:1415px;top:380px;width:10px;height:17px;border:1px solid #3a3a3a;background:linear-gradient(#888 0,#666 45%,#3a3a3a 50%,#3a3a3a 100%)"></div>
<div class="a" style="left:1189px;top:402px;width:249px;height:1px;background:#3c3c3c;"></div>
<div class="a" style="left:1189px;top:403px;width:249px;height:1px;background:#5c5c5c;"></div>
<div class="t" style="left:1263px;top:409px;width:102px;text-align:right;color:#e8e8e8">不透明度:&nbsp;</div>
<div class="a" style="left:1369px;top:408px;width:55px;height:19px;border:1px solid #3a3a3a;border-radius:2px;background:#363636"></div>
<div class="a" style="left:1405px;top:408px;width:19px;height:19px;border:1px solid #3a3a3a;border-radius:0 2px 2px 0;background:linear-gradient(#6e6e6e,#5e5e5e)"></div>
<div class="t" style="left:1372px;top:411px;color:#e8e8e8;font-size:11px;">100%</div>
<svg class="a" style="left:1411px;top:415px;" width="7" height="4" viewBox="0 0 7 4"><path d="M0 0H7L3.5 4Z" fill="#e8e8e8"/></svg>
<div class="a" style="left:1189px;top:430px;width:249px;height:1px;background:#3c3c3c;"></div>
<div class="a" style="left:1189px;top:431px;width:249px;height:1px;background:#5c5c5c;"></div>
<div class="t" style="left:1263px;top:437px;width:102px;text-align:right;color:#e8e8e8">填充:&nbsp;</div>
<div class="a" style="left:1369px;top:436px;width:55px;height:19px;border:1px solid #3a3a3a;border-radius:2px;background:#363636"></div>
<div class="a" style="left:1405px;top:436px;width:19px;height:19px;border:1px solid #3a3a3a;border-radius:0 2px 2px 0;background:linear-gradient(#6e6e6e,#5e5e5e)"></div>
<div class="t" style="left:1372px;top:439px;color:#e8e8e8;font-size:11px;">100%</div>
<svg class="a" style="left:1411px;top:443px;" width="7" height="4" viewBox="0 0 7 4"><path d="M0 0H7L3.5 4Z" fill="#e8e8e8"/></svg>
<div class="a" style="left:1189px;top:459px;width:249px;height:382px;background:#474747;"></div>
<div class="a" style="left:1424px;top:459px;width:14px;height:382px;background:#3c3c3c;"></div>
<div class="a" style="left:1189px;top:459px;width:235px;height:2px;background:#2e2e2e;"></div>
<div class="a" style="left:1189px;top:461px;width:235px;height:38px;background:#6b7c92;"></div>
<div class="a" style="left:1189px;top:499px;width:235px;height:1px;background:#2e2e2e;"></div>
<div class="a" style="left:1189px;top:500px;width:235px;height:38px;background:#535353;"></div>
<div class="a" style="left:1189px;top:538px;width:235px;height:1px;background:#2e2e2e;"></div>
<div class="a" style="left:1189px;top:539px;width:235px;height:39px;background:#535353;"></div>
<div class="a" style="left:1189px;top:577px;width:235px;height:1px;background:#2e2e2e;"></div>
<div class="a" style="left:1219px;top:500px;width:1px;height:77px;background:#3e3e3e;"></div>
<svg class="a" style="left:1197px;top:514px;" width="14" height="9" viewBox="0 0 14 9"><path d="M0.3 4.5C3 0 11 0 13.7 4.5C11 9 3 9 0.3 4.5Z" fill="#cfcfcf"/><circle cx="7" cy="4.5" r="2.8" fill="#333"/><circle cx="7.8" cy="3.4" r="0.9" fill="#e0e0e0"/></svg>
<svg class="a" style="left:1197px;top:553px;" width="14" height="9" viewBox="0 0 14 9"><path d="M0.3 4.5C3 0 11 0 13.7 4.5C11 9 3 9 0.3 4.5Z" fill="#cfcfcf"/><circle cx="7" cy="4.5" r="2.8" fill="#333"/><circle cx="7.8" cy="3.4" r="0.9" fill="#e0e0e0"/></svg>
<svg class="a" style="left:1223px;top:503px" width="27" height="33" viewBox="0 0 27 33"><rect x="0.5" y="0.5" width="26" height="32" fill="#e4edf5" stroke="#151515"/><path d="M6 33V12C6 8 9 6 12 5L14 2H19L21 5C24 6 26 8 26 12V33Z" fill="#5a82bd"/><path d="M9 14V30M22 14V30" stroke="#3f659e" stroke-width="1"/><rect x="6" y="25" width="20" height="3" fill="#2d3d55"/><rect x="6" y="28" width="20" height="4.5" fill="#6f6f78"/></svg>
<svg class="a" style="left:1223px;top:542px" width="27" height="33" viewBox="0 0 27 33"><rect x="0.5" y="0.5" width="26" height="32" fill="#e4edf5" stroke="#151515"/><path d="M6 33V12C6 8 9 6 12 5L14 2H19L21 5C24 6 26 8 26 12V33Z" fill="#5a82bd"/><path d="M9 14V30M22 14V30" stroke="#3f659e" stroke-width="1"/><rect x="6" y="25" width="20" height="3" fill="#2d3d55"/><rect x="6" y="28" width="20" height="4.5" fill="#6f6f78"/></svg>
<div class="t" style="left:1258px;top:513px;color:#f4f4f4;font-size:12px;">图层 1</div>
<div class="t" style="left:1260px;top:552px;color:#f4f4f4;font-size:12px;font-style:italic">背景</div>
<svg class="a" style="left:1397px;top:551px;" width="10" height="13" viewBox="0 0 10 13"><path d="M2.5 6V3.5C2.5 0.5 7.5 0.5 7.5 3.5V6" fill="none" stroke="#d0d0d0" stroke-width="1.3"/><rect x="0.5" y="6" width="9" height="6.5" fill="none" stroke="#d0d0d0" stroke-width="1.1"/><rect x="4" y="8" width="2" height="2" fill="#d0d0d0"/></svg>
<div class="a" style="left:1189px;top:841px;width:249px;height:1px;background:#5e5e5e;"></div>
<div class="a" style="left:1189px;top:842px;width:249px;height:17px;background:#535353;"></div>
<svg class="a" style="left:1236px;top:847px;" width="14" height="7" viewBox="0 0 14 7"><path d="M5 0.8H3.2A2.7 2.7 0 0 0 3.2 6.2H5M9 0.8H10.8A2.7 2.7 0 0 1 10.8 6.2H9M4.5 3.5H9.5" fill="none" stroke="#b0b0b0" stroke-width="1.5"/></svg>
<div class="t" style="left:1265px;top:843px;color:#b0b0b0;font-size:14px;font-style:italic;font-family:Liberation Serif;line-height:14px">fx</div>
<svg class="a" style="left:1279px;top:855px;" width="3" height="2" viewBox="0 0 3 2"><path d="M0 0H3L1.5 2Z" fill="#b0b0b0"/></svg>
<svg class="a" style="left:1291px;top:848px;" width="13" height="8" viewBox="0 0 13 8"><rect x="0" y="0" width="13" height="8" fill="#b0b0b0"/><circle cx="6.5" cy="4" r="2.6" fill="#535353"/></svg>
<svg class="a" style="left:1318px;top:845px;" width="12" height="12" viewBox="0 0 12 12"><circle cx="6" cy="6" r="5.2" fill="none" stroke="#b0b0b0" stroke-width="1.3"/><path d="M6 6M2.3 9.7A5.2 5.2 0 0 1 9.7 2.3Z" fill="#b0b0b0"/></svg>
<svg class="a" style="left:1333px;top:855px;" width="3" height="2" viewBox="0 0 3 2"><path d="M0 0H3L1.5 2Z" fill="#b0b0b0"/></svg>
<svg class="a" style="left:1345px;top:847px;" width="12" height="9" viewBox="0 0 12 9"><path d="M0 0H5L6 1.5H12V9H0Z" fill="#b0b0b0"/></svg>
<svg class="a" style="left:1372px;top:846px;" width="11" height="11" viewBox="0 0 11 11"><path d="M3 0H11V11H0V3Z" fill="#b0b0b0"/></svg>
<svg class="a" style="left:1399px;top:846px;" width="11" height="11" viewBox="0 0 11 11"><rect x="0" y="1" width="11" height="1.5" fill="#b0b0b0"/><rect x="3.5" y="0" width="4" height="1.2" fill="#b0b0b0"/><path d="M1.5 3.5H9.5V11H1.5Z" fill="none" stroke="#b0b0b0" stroke-width="1.1"/><path d="M4 4.5V10M5.5 4.5V10M7 4.5V10" stroke="#b0b0b0" stroke-width="0.8"/></svg>
<div class="a" style="left:1192px;top:0px;width:138px;height:515px;background:#fff;border:1px solid #a0a0a0;border-left-color:#e8e8e8;box-shadow:1px 1px 1px rgba(0,0,0,.35)"></div>
<div class="t" style="left:1197px;top:2px;color:#000000;font-size:12px;line-height:14px;-webkit-text-stroke:0.15px #000">正常</div>
<div class="t" style="left:1197px;top:18px;color:#000000;font-size:12px;line-height:14px;-webkit-text-stroke:0.15px #000">溶解</div>
<div class="a" style="left:1193px;top:41px;width:136px;height:1px;background:#111111;"></div>
<div class="t" style="left:1197px;top:50px;color:#000000;font-size:12px;line-height:14px;-webkit-text-stroke:0.15px #000">变暗</div>
<div class="t" style="left:1197px;top:66px;color:#000000;font-size:12px;line-height:14px;-webkit-text-stroke:0.15px #000">正片叠底</div>
<div class="t" style="left:1197px;top:82px;color:#000000;font-size:12px;line-height:14px;-webkit-text-stroke:0.15px #000">颜色加深</div>
<div class="t" style="left:1197px;top:98px;color:#000000;font-size:12px;line-height:14px;-webkit-text-stroke:0.15px #000">线性加深</div>
<div class="t" style="left:1197px;top:114px;color:#000000;font-size:12px;line-height:14px;-webkit-text-stroke:0.15px #000">深色</div>
<div class="a" style="left:1193px;top:137px;width:136px;height:1px;background:#111111;"></div>
<div class="t" style="left:1197px;top:146px;color:#000000;font-size:12px;line-height:14px;-webkit-text-stroke:0.15px #000">变亮</div>
<div class="t" style="left:1197px;top:162px;color:#000000;font-size:12px;line-height:14px;-webkit-text-stroke:0.15px #000">滤色</div>
<div class="t" style="left:1197px;top:178px;color:#000000;font-size:12px;line-height:14px;-webkit-text-stroke:0.15px #000">颜色减淡</div>
<div class="t" style="left:1197px;top:194px;color:#000000;font-size:12px;line-height:14px;-webkit-text-stroke:0.15px #000">线性减淡（添加）</div>
<div class="t" style="left:1197px;top:210px;color:#000000;font-size:12px;line-height:14px;-webkit-text-stroke:0.15px #000">浅色</div>
<div class="a" style="left:1193px;top:233px;width:136px;height:1px;background:#111111;"></div>
<div class="t" style="left:1197px;top:242px;color:#000000;font-size:12px;line-height:14px;-webkit-text-stroke:0.15px #000">叠加</div>
<div class="t" style="left:1197px;top:258px;color:#000000;font-size:12px;line-height:14px;-webkit-text-stroke:0.15px #000">柔光</div>
<div class="t" style="left:1197px;top:274px;color:#000000;font-size:12px;line-height:14px;-webkit-text-stroke:0.15px #000">强光</div>
<div class="t" style="left:1197px;top:290px;color:#000000;font-size:12px;line-height:14px;-webkit-text-stroke:0.15px #000">亮光</div>
<div class="a" style="left:1193px;top:305px;width:135px;height:16px;background:#3399ff;"></div>
<div class="t" style="left:1197px;top:306px;color:#ffffff;font-size:12px;line-height:14px;-webkit-text-stroke:0.15px #fff">线性光</div>
<div class="t" style="left:1197px;top:322px;color:#000000;font-size:12px;line-height:14px;-webkit-text-stroke:0.15px #000">点光</div>
<div class="t" style="left:1197px;top:338px;color:#000000;font-size:12px;line-height:14px;-webkit-text-stroke:0.15px #000">实色混合</div>
<div class="a" style="left:1193px;top:361px;width:136px;height:1px;background:#111111;"></div>
<div class="t" style="left:1197px;top:370px;color:#000000;font-size:12px;line-height:14px;-webkit-text-stroke:0.15px #000">差值</div>
<div class="t" style="left:1197px;top:386px;color:#000000;font-size:12px;line-height:14px;-webkit-text-stroke:0.15px #000">排除</div>
<div class="t" style="left:1197px;top:402px;color:#000000;font-size:12px;line-height:14px;-webkit-text-stroke:0.15px #000">减去</div>
<div class="t" style="left:1197px;top:418px;color:#000000;font-size:12px;line-height:14px;-webkit-text-stroke:0.15px #000">划分</div>
<div class="a" style="left:1193px;top:441px;width:136px;height:1px;background:#111111;"></div>
<div class="t" style="left:1197px;top:450px;color:#000000;font-size:12px;line-height:14px;-webkit-text-stroke:0.15px #000">色相</div>
<div class="t" style="left:1197px;top:466px;color:#000000;font-size:12px;line-height:14px;-webkit-text-stroke:0.15px #000">饱和度</div>
<div class="t" style="left:1197px;top:482px;color:#000000;font-size:12px;line-height:14px;-webkit-text-stroke:0.15px #000">颜色</div>
<div class="t" style="left:1197px;top:498px;color:#000000;font-size:12px;line-height:14px;-webkit-text-stroke:0.15px #000">明度</div>
<div class="a" style="left:1160px;top:295px;width:190px;height:30px;border:3px solid #e3141b"></div>
<div class="a" style="left:554px;top:799px;width:128px;height:29px;background:#fff;border:1px solid #d8d8d8"></div>
<svg class="a" style="left:562px;top:827px;" width="12" height="7" viewBox="0 0 12 7"><path d="M0 0H12L6 6Z" fill="#fff"/></svg>
<div class="t" style="left:564px;top:805px;color:#333333;font-size:12px;">个性设置，点我看看</div>
<div class="a" style="left:578px;top:837px;width:182px;height:22px;background:#ffffff;"></div>
<svg class="a" style="left:553px;top:831px;" width="31" height="29" viewBox="0 0 31 29"><g transform="rotate(-12 15 15)"><rect x="3" y="3" width="25" height="26" rx="4" fill="#ef5a24"/></g><path d="M22 9C16 6 7 8 8 13C9 17 19 15 19 19C19 22 11 22 8 20" fill="none" stroke="#fff" stroke-width="4.2" stroke-linecap="round"/></svg>
<svg class="a" style="left:588px;top:842px;" width="15" height="14" viewBox="0 0 15 14"><rect x="1.2" y="3.2" width="12.6" height="6.6" fill="none" stroke="#2b78c8" stroke-width="2.4"/><rect x="6.3" y="0" width="2.4" height="14" fill="#2b78c8"/></svg>
<svg class="a" style="left:610px;top:844px;" width="13" height="12" viewBox="0 0 13 12"><circle cx="2.5" cy="3" r="1.6" fill="none" stroke="#2b78c8" stroke-width="1.2"/><path d="M9 6C11 6 11 9 8 11" fill="none" stroke="#2b78c8" stroke-width="2.2"/></svg>
<svg class="a" style="left:631px;top:841px;" width="17" height="17" viewBox="0 0 17 17"><circle cx="8.5" cy="8.5" r="7.3" fill="none" stroke="#2b78c8" stroke-width="1.6"/><circle cx="6" cy="6.5" r="1" fill="#2b78c8"/><circle cx="11" cy="6.5" r="1" fill="#2b78c8"/><path d="M5 10C7 12.5 10 12.5 12 10" fill="none" stroke="#2b78c8" stroke-width="1.4"/></svg>
<svg class="a" style="left:654px;top:841px;" width="14" height="17" viewBox="0 0 14 17"><rect x="4" y="0" width="6" height="11" rx="3" fill="#2b78c8"/><path d="M1.5 7C1.5 13 12.5 13 12.5 7M7 12V16M4 16.2H10" fill="none" stroke="#2b78c8" stroke-width="1.5"/></svg>
<svg class="a" style="left:675px;top:842px;" width="16" height="12" viewBox="0 0 16 12"><rect x="0.8" y="0.8" width="14.4" height="10.4" rx="2" fill="none" stroke="#2b78c8" stroke-width="1.6"/><rect x="3.0" y="3" width="1.5" height="1.5" fill="#2b78c8"/><rect x="3.0" y="5.5" width="1.5" height="1.5" fill="#2b78c8"/><rect x="5.5" y="3" width="1.5" height="1.5" fill="#2b78c8"/><rect x="5.5" y="5.5" width="1.5" height="1.5" fill="#2b78c8"/><rect x="8.0" y="3" width="1.5" height="1.5" fill="#2b78c8"/><rect x="8.0" y="5.5" width="1.5" height="1.5" fill="#2b78c8"/><rect x="10.5" y="3" width="1.5" height="1.5" fill="#2b78c8"/><rect x="10.5" y="5.5" width="1.5" height="1.5" fill="#2b78c8"/><rect x="4" y="8" width="8" height="1.5" fill="#2b78c8"/></svg>
<svg class="a" style="left:699px;top:841px;" width="17" height="16" viewBox="0 0 17 16"><circle cx="6" cy="3.5" r="3" fill="#c4c8cc"/><path d="M1 14C1 8 11 8 11 12V14Z" fill="#c4c8cc"/></svg>
<div class="t" style="left:704px;top:848px;color:#a8acb0;font-size:9px;font-weight:bold;line-height:9px">19</div>
<svg class="a" style="left:720px;top:841px;" width="14" height="14" viewBox="0 0 14 14"><path d="M4 0.5H10L14 4L12 6.5L11 5.5V13.5H3V5.5L2 6.5L0 4Z" fill="#2b78c8"/></svg>
<svg class="a" style="left:741px;top:842px;" width="14" height="13" viewBox="0 0 14 13"><rect x="0" y="0" width="6" height="6" fill="#2b78c8"/><rect x="7.8" y="0.8" width="5" height="4.5" fill="none" stroke="#2b78c8" stroke-width="1.4"/><rect x="0" y="7" width="6" height="6" fill="#2b78c8"/><rect x="7" y="7" width="6.5" height="6" fill="#2b78c8"/></svg>
<svg class="a" style="left:1255px;top:800px;" width="82" height="56" viewBox="0 0 82 56"><path d="M9.4 29.3L53.7 4.9L67.7 18.8L56 18.8L51 14.3L32.8 24.4L31.4 28L23.7 28Z" fill="#fff"/><path d="M23.7 27H31.4V46H48V50.5H23.7Z" fill="#fff"/><path d="M45 18.8H66.5L65.5 25H45L31.4 31.8V28.5Z" fill="#fff"/><path d="M45 31.8H65L64 36.3H45L31.4 41.9V38Z" fill="#fff"/><path d="M45 41.9H62L61 46H45L35 50V46Z" fill="#fff"/><rect x="64" y="20" width="3.6" height="3.6" fill="#fff"/><rect x="70" y="23" width="3.6" height="3.6" fill="#fff"/><rect x="60" y="26" width="3.6" height="3.6" fill="#fff"/><rect x="67" y="29" width="3.6" height="3.6" fill="#fff"/><rect x="73" y="27" width="3.6" height="3.6" fill="#fff"/><rect x="57" y="33" width="3.6" height="3.6" fill="#fff"/><rect x="64" y="35" width="3.6" height="3.6" fill="#fff"/><rect x="71" y="34" width="3.6" height="3.6" fill="#fff"/><rect x="55" y="40" width="3.6" height="3.6" fill="#fff"/><rect x="62" y="42" width="3.6" height="3.6" fill="#fff"/><rect x="69" y="40" width="3.6" height="3.6" fill="#fff"/><rect x="58" y="46" width="3.6" height="3.6" fill="#fff"/></svg>
<div class="t" style="left:1339px;top:813px;color:#ffffff;font-size:23px;font-weight:bold;line-height:26px;letter-spacing:0px">系统之家</div>
<div class="t" style="left:1331px;top:842px;color:#ffffff;font-size:10px;font-family:Liberation Serif;line-height:10px;letter-spacing:0.3px">XITONGZHIJIA.NET</div>
</body></html>
